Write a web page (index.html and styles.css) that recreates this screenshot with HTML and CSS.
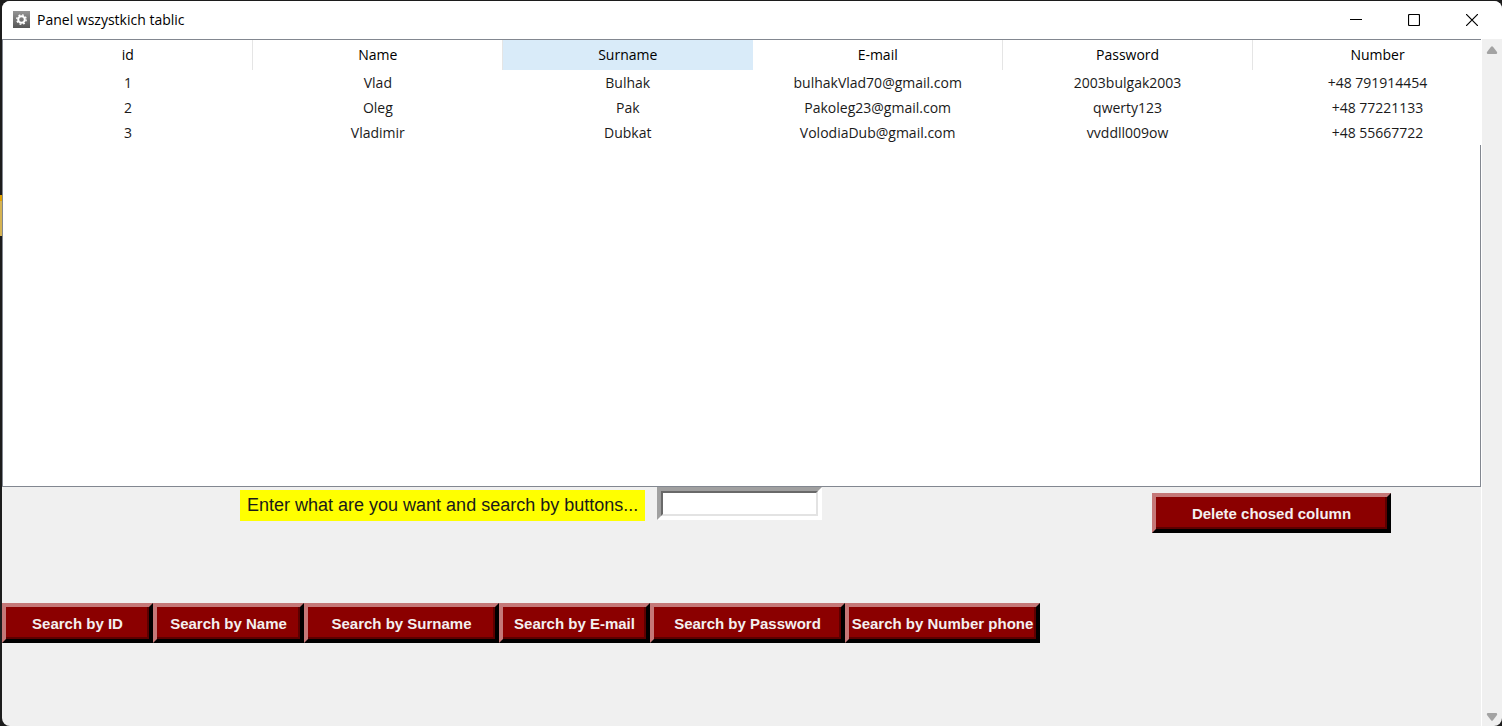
FILE: index.html
```html
<!DOCTYPE html>
<html lang="pl">
<head>
<meta charset="utf-8">
<title>Panel wszystkich tablic</title>
<link rel="stylesheet" href="styles.css">
</head>
<body>
<div class="window">
  <header class="titlebar">
    <svg class="app-icon" width="17" height="17" viewBox="0 0 17 17" aria-hidden="true">
      <defs><linearGradient id="steel" x1="0" y1="0" x2="0" y2="1"><stop offset="0" stop-color="#959595"/><stop offset="1" stop-color="#565656"/></linearGradient></defs>
      <rect width="17" height="17" fill="url(#steel)"/>
      <circle cx="8.5" cy="8.5" r="4.7" fill="none" stroke="#fff" stroke-width="1.4" stroke-dasharray="1.85 1.84"/>
      <circle cx="8.5" cy="8.5" r="3.3" fill="none" stroke="#fff" stroke-width="2"/>
    </svg>
    <h1 class="title">Panel wszystkich tablic</h1>
    <div class="window-controls">
      <button class="control" type="button" aria-label="Minimize"><svg width="12" height="12" viewBox="0 0 12 12"><path d="M0 5.5H12"/></svg></button>
      <button class="control" type="button" aria-label="Maximize"><svg width="12" height="12" viewBox="0 0 12 12"><rect x=".5" y=".5" width="11" height="11" rx="1"/></svg></button>
      <button class="control" type="button" aria-label="Close"><svg width="12" height="12" viewBox="0 0 12 12"><path d="M0 0L12 12M12 0L0 12"/></svg></button>
    </div>
  </header>
  <div class="body">
    <main class="content">
      <div class="table-box">
        <table class="records">
          <thead><tr><th>id</th><th>Name</th><th class="hovered">Surname</th><th>E-mail</th><th>Password</th><th>Number</th></tr></thead>
          <tbody>
            <tr><td>1</td><td>Vlad</td><td>Bulhak</td><td>bulhakVlad70@gmail.com</td><td>2003bulgak2003</td><td>+48 791914454</td></tr>
            <tr><td>2</td><td>Oleg</td><td>Pak</td><td>Pakoleg23@gmail.com</td><td>qwerty123</td><td>+48 77221133</td></tr>
            <tr><td>3</td><td>Vladimir</td><td>Dubkat</td><td>VolodiaDub@gmail.com</td><td>vvddll009ow</td><td>+48 55667722</td></tr>
          </tbody>
        </table>
        <div class="table-rest"></div>
      </div>
      <div class="search-row">
        <label class="search-label" for="query">Enter what are you want and search by buttons...</label>
        <span class="entry"><input class="entry-input" id="query" type="text"></span>
        <button class="action delete" type="button">Delete chosed column</button>
      </div>
      <div class="button-row">
        <button class="action" type="button">Search by ID</button>
        <button class="action" type="button">Search by Name</button>
        <button class="action wide" type="button">Search by Surname</button>
        <button class="action" type="button">Search by E-mail</button>
        <button class="action wide" type="button">Search by Password</button>
        <button class="action wide" type="button">Search by Number phone</button>
      </div>
    </main>
    <div class="scrollbar">
      <button class="scroll-arrow" type="button" aria-label="Scroll up"><svg width="12" height="8" viewBox="0 0 12 8"><path d="M5 .7Q6 -.3 7 .7L11 6Q11.6 8 10 8H2Q.4 8 1 6Z"/></svg></button>
      <button class="scroll-arrow" type="button" aria-label="Scroll down"><svg width="12" height="8" viewBox="0 0 12 8"><path d="M5 7.3Q6 8.3 7 7.3L11 2Q11.6 0 10 0H2Q.4 0 1 2Z"/></svg></button>
    </div>
  </div>
</div>
</body>
</html>
```
FILE: styles.css
```css
* { box-sizing: border-box; }

body {
  margin: 0;
  height: 100vh;
  padding: 1px 0 0 2px;
  background: linear-gradient(#e0a000, #e0a000) 0 195px / 2px 6px no-repeat,
    linear-gradient(#d6b352, #d6b352) 0 201px / 2px 35px no-repeat, #1c1c1c;
  font-family: "Open Sans", "Noto Sans", sans-serif;
  font-size: 14px;
  color: #1a1a1a;
}

.window {
  display: flex;
  flex-direction: column;
  height: 100%;
  overflow: hidden;
  border-radius: 8px;
  background: #f0f0f0;
}

.titlebar {
  display: flex;
  align-items: center;
  height: 38px;
  padding: 0 1px 2px 11px;
  background: #fff;
}

.title {
  margin: 0 0 0 7px;
  font-size: 14px;
  font-weight: 400;
  color: #000;
}

.window-controls {
  display: flex;
  height: 100%;
  margin-left: auto;
  padding-top: 2px;
}

.control {
  display: flex;
  align-items: center;
  justify-content: center;
  width: 58px;
  padding: 0;
  border: 0;
  background: none;
}

.control svg {
  fill: none;
  stroke: #000;
  stroke-width: 1.2;
}

.body {
  display: flex;
  flex: 1;
}

.content {
  flex: 1;
  min-width: 0;
  border-right: 1px solid #fff;
}

.table-box {
  display: flex;
  flex-direction: column;
  height: 448px;
  overflow: hidden;
  border: 1px solid #828790;
  border-right: 0;
  background: #fff;
}

.records {
  width: calc(100% + 22px);
  table-layout: fixed;
  border-collapse: collapse;
  background: #fff;
  text-align: center;
}

.table-rest {
  flex: 1;
  border-right: 1px solid #828790;
}

.records th {
  height: 30px;
  padding: 0;
  border-right: 1px solid #e5e5e5;
  font-weight: 400;
  line-height: 18px;
  color: #000;
}

.records th.hovered {
  border-color: #d9ebf9;
  background: #d9ebf9;
}

.records td {
  height: 25px;
  padding: 0;
}

.search-row {
  display: flex;
  align-items: flex-start;
  padding: 0 90px 0 238px;
}

.search-label {
  margin-top: 3px;
  padding: 0 7px;
  background: #ff0;
  font: 18px/31px "Liberation Sans", Arial, sans-serif;
}

.entry {
  display: flex;
  width: 165px;
  margin-left: 12px;
  border: 4px solid;
  border-color: #a0a0a0 #fff #fff #a0a0a0;
}

.entry-input {
  width: 100%;
  height: 25px;
  border: 2px solid;
  border-color: #696969 #e3e3e3 #e3e3e3 #696969;
  border-radius: 0;
  background: #fff;
  font: 16px "Liberation Sans", Arial, sans-serif;
}

.action {
  width: 151px;
  height: 40px;
  padding: 0;
  border: 4px solid;
  border-color: #c57878 #000 #000 #c57878;
  background: #8b0000;
  box-shadow: inset -2px -2px #5c0000;
  font: bold 15px "Liberation Sans", Arial, sans-serif;
  color: #f4efef;
  white-space: nowrap;
}

.action.wide { width: 195px; }

.action.delete {
  width: 239px;
  margin: 6px 0 0 auto;
}

.button-row {
  display: flex;
  padding-top: 70px;
}

.scrollbar {
  display: flex;
  flex-direction: column;
  justify-content: space-between;
  width: 20px;
  padding: 7px 0 5px;
}

.scroll-arrow {
  display: flex;
  justify-content: center;
  padding: 0;
  border: 0;
  background: none;
}

.scroll-arrow svg { fill: #a3a3a3; }
```
